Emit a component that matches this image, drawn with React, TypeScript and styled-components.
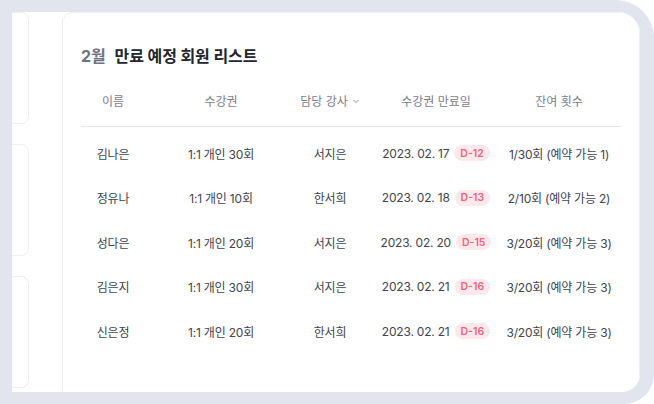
import styled, { createGlobalStyle } from "styled-components";

type Member = {
  name: string;
  pass: string;
  coach: string;
  date: string;
  dday: number;
  remain: string;
};

const members: Member[] = [
  { name: "김나은", pass: "1:1 개인 30회", coach: "서지은", date: "2023. 02. 17", dday: 12, remain: "1/30회 (예약 가능 1)" },
  { name: "정유나", pass: "1:1 개인 10회", coach: "한서희", date: "2023. 02. 18", dday: 13, remain: "2/10회 (예약 가능 2)" },
  { name: "성다은", pass: "1:1 개인 20회", coach: "서지은", date: "2023. 02. 20", dday: 15, remain: "3/20회 (예약 가능 3)" },
  { name: "김은지", pass: "1:1 개인 30회", coach: "서지은", date: "2023. 02. 21", dday: 16, remain: "3/20회 (예약 가능 3)" },
  { name: "신은정", pass: "1:1 개인 20회", coach: "한서희", date: "2023. 02. 21", dday: 16, remain: "3/20회 (예약 가능 3)" },
];

export default function App() {
  return (
    <>
      <GlobalStyle />
      <Frame>
        <Screen>
          <Sidebar>
            <SideCard />
            <SideCard />
            <SideCard />
          </Sidebar>
          <MainCard>
            <Title>
              <Month>2월</Month>
              만료 예정 회원 리스트
            </Title>
            <HeaderRow>
              <HeadCell>이름</HeadCell>
              <HeadCell>수강권</HeadCell>
              <HeadCell>
                담당 강사
                <Chevron viewBox="0 0 8 8">
                  <path d="M1.5 3 L4 5.5 L6.5 3" />
                </Chevron>
              </HeadCell>
              <HeadCell>수강권 만료일</HeadCell>
              <HeadCell>잔여 횟수</HeadCell>
            </HeaderRow>
            <Body>
              {members.map((m) => (
                <Row key={m.name}>
                  <Cell>{m.name}</Cell>
                  <Cell>{m.pass}</Cell>
                  <Cell>{m.coach}</Cell>
                  <Cell>
                    {m.date}
                    <DdayBadge>D-{m.dday}</DdayBadge>
                  </Cell>
                  <Cell>{m.remain}</Cell>
                </Row>
              ))}
            </Body>
          </MainCard>
        </Screen>
      </Frame>
    </>
  );
}

const GlobalStyle = createGlobalStyle`
  body {
    margin: 0;
    background: #ffffff;
    font-family: "Inter", "Noto Sans CJK KR", sans-serif;
  }
`;

const Frame = styled.div`
  box-sizing: border-box;
  width: 654px;
  height: 404px;
  padding: 12px 14px 12px 12px;
  background: #e2e4ee;
  border-top-right-radius: 38px;
  border-bottom-right-radius: 30px;
`;

const Screen = styled.div`
  display: flex;
  height: 100%;
  background: #ffffff;
  border-top-right-radius: 22px;
  border-bottom-right-radius: 18px;
  overflow: hidden;
`;

const Sidebar = styled.div`
  display: flex;
  flex-direction: column;
  gap: 20px;
  width: 17px;
  flex-shrink: 0;
  margin-right: 33px;
`;

const SideCard = styled.div`
  flex-shrink: 0;
  box-sizing: border-box;
  height: 112px;
  margin-left: -24px;
  border: 1px solid #eceef3;
  border-radius: 8px;
`;

const MainCard = styled.div`
  flex: 1;
  box-sizing: border-box;
  height: 420px;
  padding: 33px 18px 0;
  border: 1px solid #eceef3;
  border-radius: 10px 0 0 0;
`;

const Title = styled.h2`
  margin: 0;
  font-size: 16px;
  line-height: 20px;
  font-weight: 700;
  color: #23262f;
  letter-spacing: -0.1px;
`;

const Month = styled.span`
  color: #6f7380;
  margin-right: 9px;
`;

const columns = "64px 152px 66px 146px 100px";

const HeaderRow = styled.div`
  display: grid;
  grid-template-columns: ${columns};
  align-items: center;
  width: 540px;
  height: 51px;
  margin-top: 9px;
  border-bottom: 1px solid #e6e7ec;
`;

const HeadCell = styled.div`
  display: flex;
  justify-content: center;
  align-items: center;
  gap: 4px;
  white-space: nowrap;
  font-size: 12px;
  color: #7b7e89;
`;

const Chevron = styled.svg`
  width: 8px;
  height: 8px;
  fill: none;
  stroke: #8a8d98;
  stroke-width: 1;
`;

const Body = styled.div`
  padding-top: 4px;
`;

const Row = styled.div`
  display: grid;
  grid-template-columns: ${columns};
  align-items: center;
  width: 540px;
  height: 44.5px;
`;

const Cell = styled.div`
  display: flex;
  justify-content: center;
  align-items: center;
  gap: 5px;
  white-space: nowrap;
  font-size: 12px;
  letter-spacing: -0.2px;
  color: #41444e;
`;

const DdayBadge = styled.span`
  display: inline-flex;
  align-items: center;
  height: 16px;
  padding: 0 6px;
  border-radius: 8px;
  background: #fde8ec;
  color: #f0647c;
  font-size: 10.5px;
  font-weight: 600;
  letter-spacing: 0;
`;
